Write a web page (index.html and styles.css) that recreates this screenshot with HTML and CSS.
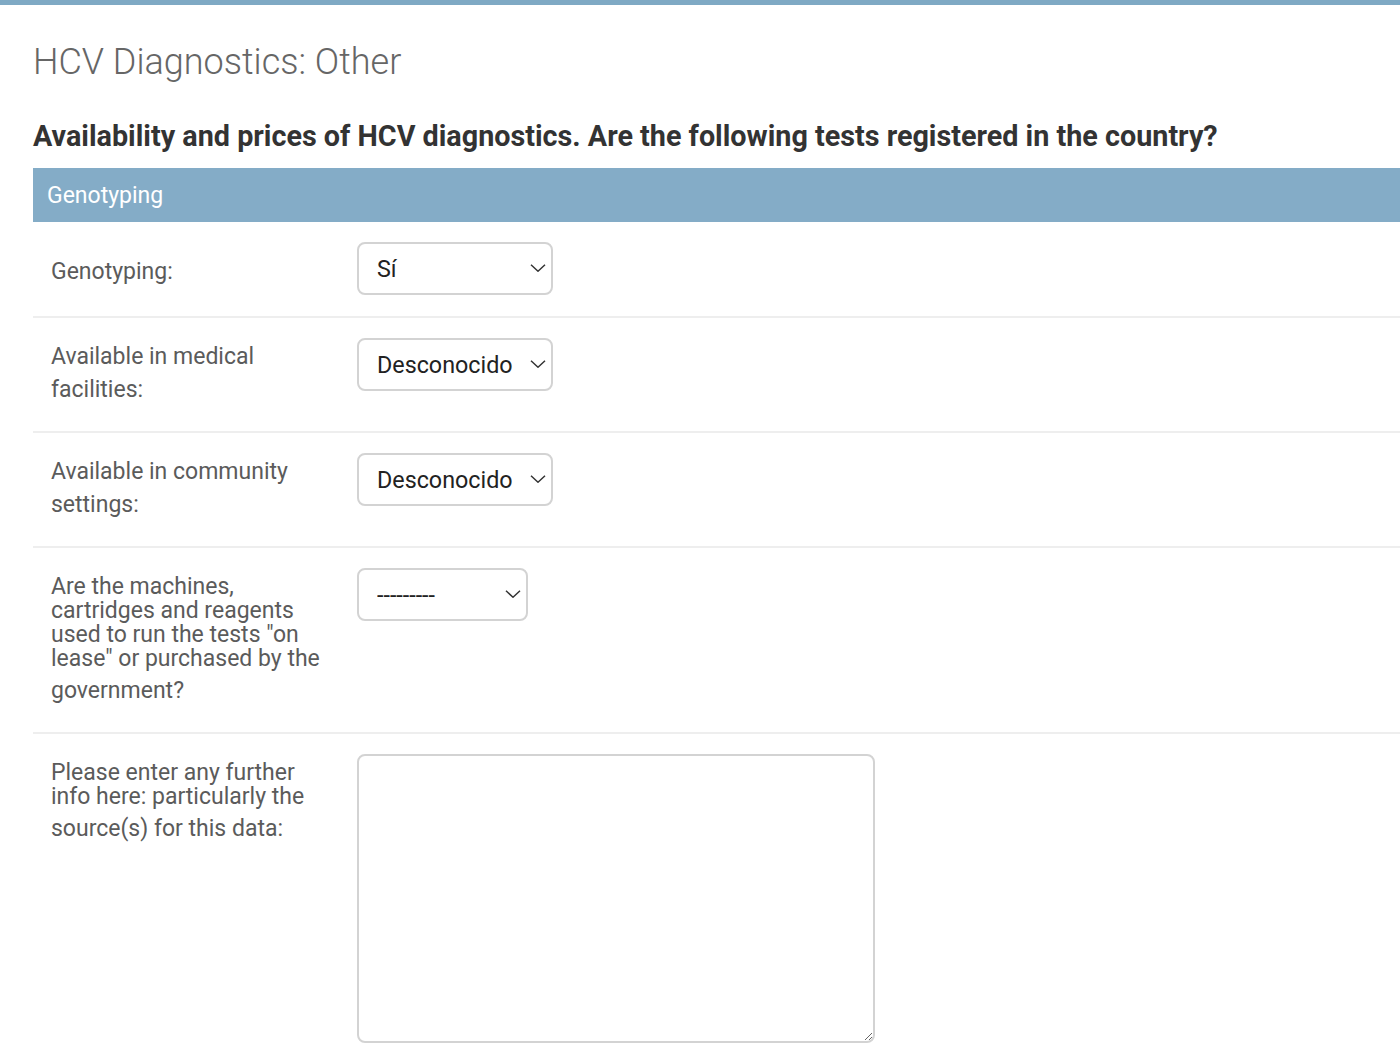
FILE: index.html
```html
<!DOCTYPE html>
<html lang="en">
<head>
<meta charset="utf-8">
<title>HCV Diagnostics: Other</title>
<link rel="stylesheet" href="styles.css">
</head>
<body>
<div class="topbar"></div>
<main class="content">
  <h1 class="title">HCV Diagnostics: Other</h1>
  <h2 class="question">Availability and prices of HCV diagnostics. Are the following tests registered in the country?</h2>
  <fieldset class="module">
    <h3 class="caption">Genotyping</h3>
    <div class="form-row">
      <label class="label single"><span class="last">Genotyping:</span></label>
      <div class="select-wrap w196">
        <select class="select"><option>Sí</option></select>
        <svg class="chev" viewBox="0 0 16 8" width="16" height="8"><path d="M1 0.8l7 6.4 7-6.4" fill="none" stroke="#333" stroke-width="1.5"/></svg>
      </div>
    </div>
    <div class="form-row">
      <label class="label"><span class="last">Available in medical facilities:</span></label>
      <div class="select-wrap w196">
        <select class="select"><option>Desconocido</option></select>
        <svg class="chev" viewBox="0 0 16 8" width="16" height="8"><path d="M1 0.8l7 6.4 7-6.4" fill="none" stroke="#333" stroke-width="1.5"/></svg>
      </div>
    </div>
    <div class="form-row">
      <label class="label"><span class="last">Available in community settings:</span></label>
      <div class="select-wrap w196">
        <select class="select"><option>Desconocido</option></select>
        <svg class="chev" viewBox="0 0 16 8" width="16" height="8"><path d="M1 0.8l7 6.4 7-6.4" fill="none" stroke="#333" stroke-width="1.5"/></svg>
      </div>
    </div>
    <div class="form-row">
      <label class="label"><span class="tight">Are the machines, cartridges and reagents used to run the tests "on lease" or purchased by the</span><span class="last">government?</span></label>
      <div class="select-wrap w170">
        <select class="select"><option>---------</option></select>
        <svg class="chev" viewBox="0 0 16 8" width="16" height="8"><path d="M1 0.8l7 6.4 7-6.4" fill="none" stroke="#333" stroke-width="1.5"/></svg>
      </div>
    </div>
    <div class="form-row">
      <label class="label"><span class="tight">Please enter any further info here: particularly the</span><span class="last">source(s) for this data:</span></label>
      <textarea class="textarea"></textarea>
    </div>
  </fieldset>
</main>
</body>
</html>
```
FILE: styles.css
```css
* { box-sizing: border-box; }
html, body { margin: 0; padding: 0; background: #fff; }
body {
  font-family: Roboto, "Liberation Sans", sans-serif;
  color: #333;
  overflow: hidden;
}
.topbar { height: 5px; background: #7fa9c4; }
.content { padding: 0 0 0 33px; }
.title {
  margin: 0;
  padding-top: 33px;
  font-size: 36px;
  font-weight: 300;
  line-height: 48px;
  color: #666;
}
.question {
  margin: 0;
  padding-top: 34px;
  font-size: 28.75px;
  font-weight: 700;
  line-height: 32px;
  color: #333;
}
.module {
  margin: 16px 0 0;
  padding: 0;
  border: 0;
  min-width: 0;
}
.caption {
  margin: 0;
  height: 54px;
  padding: 0 14px;
  display: flex;
  align-items: center;
  background: #84acc7;
  color: #fff;
  font-size: 23px;
  font-weight: 400;
}
.form-row {
  display: flex;
  align-items: flex-start;
  padding: 20px 18px 21px;
  border-bottom: 2px solid #eee;
}
.form-row:last-child { border-bottom: 0; }
.label {
  width: 280px;
  flex: none;
  margin-right: 26px;
  padding: 2px 0 4px;
  font-size: 23px;
  color: #5b5b5b;
}
.label.single { padding-top: 13px; }
.label .tight { display: block; line-height: 24px; margin-top: 5px; }
.label .last { display: block; line-height: 33px; }
.label .tight + .last { margin-top: 3px; }
.select-wrap { position: relative; height: 53px; }
.w196 { width: 196px; }
.w170 { width: 171px; }
.select {
  appearance: none;
  -webkit-appearance: none;
  width: 100%;
  height: 100%;
  margin: 0;
  padding: 0 34px 0 18px;
  border: 2px solid #d3d3d3;
  border-radius: 8px;
  background: #fff;
  font-family: Roboto, "Liberation Sans", sans-serif;
  font-size: 23.3px;
  color: #222;
}
.chev { position: absolute; right: 7px; top: 22px; pointer-events: none; }
.textarea {
  width: 518px;
  height: 289px;
  margin: 0;
  border: 2px solid #d3d3d3;
  border-radius: 8px;
  background: #fff;
  resize: both;
}
```
